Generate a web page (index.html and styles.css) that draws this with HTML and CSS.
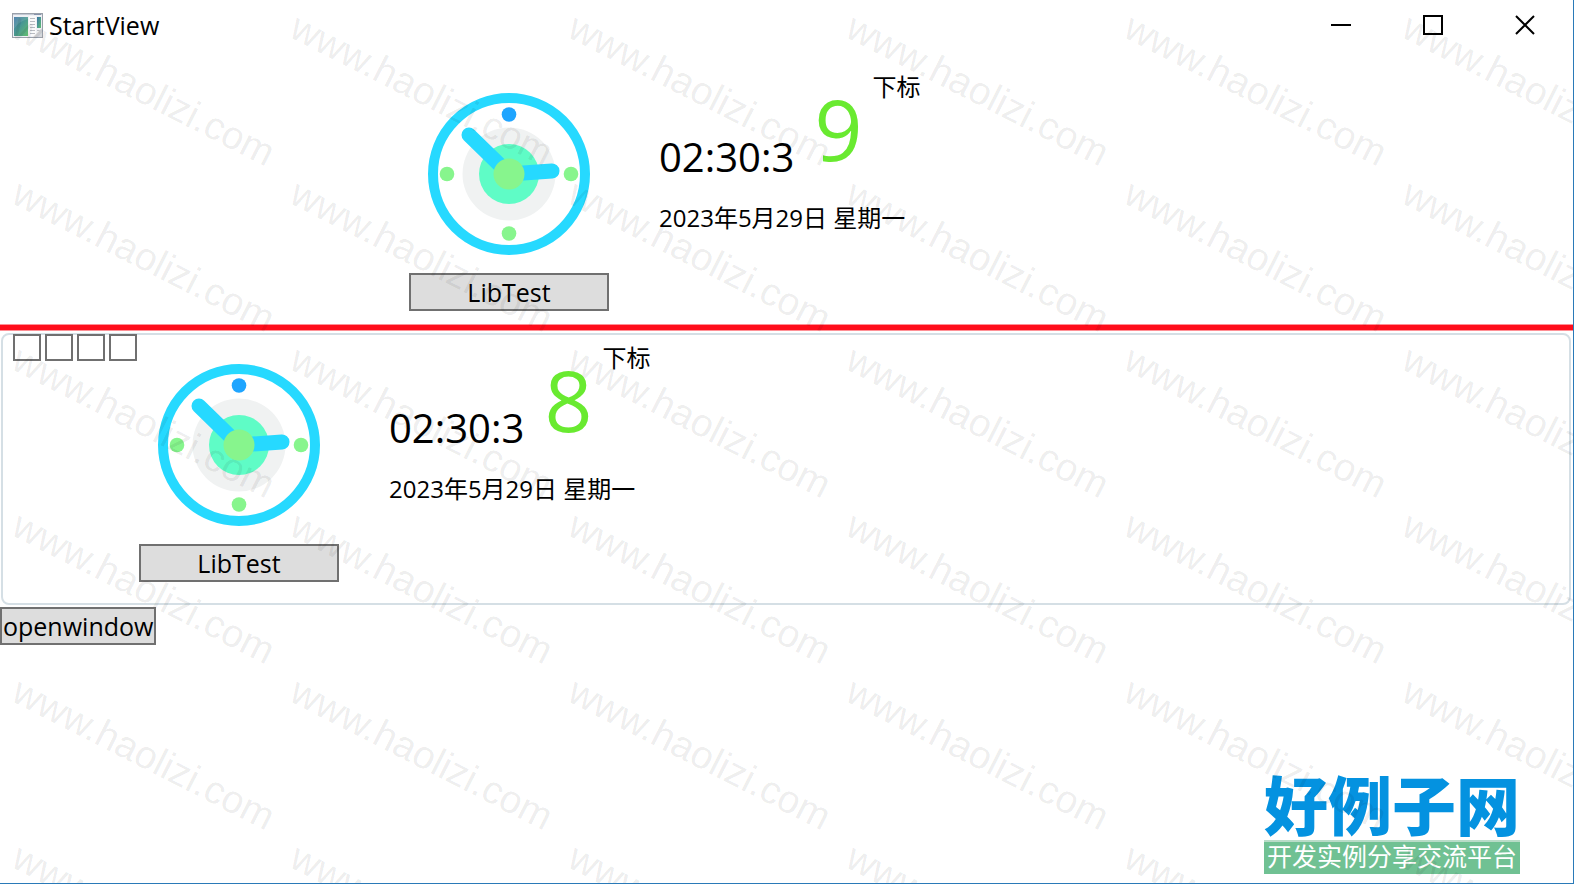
FILE: index.html
```html
<!DOCTYPE html>
<html lang="zh-CN">
<head>
<meta charset="utf-8">
<title>StartView</title>
<link rel="stylesheet" href="styles.css">
</head>
<body>
<svg class="defs" aria-hidden="true">
  <defs>
    <symbol id="clock" viewBox="0 0 162 162">
      <circle cx="81" cy="81" r="76" fill="#fff" stroke="#26d9ff" stroke-width="10"/>
      <circle cx="81" cy="81" r="46.500" fill="#f0f2f2"/>
      <circle cx="81" cy="81" r="30" fill="#5ffcc6"/>
      <path d="M81 81 41 42M81 81 124 78" fill="none" stroke="#26d9ff" stroke-width="15" stroke-linecap="round"/>
      <circle cx="81" cy="81" r="15.500" fill="#87f58d"/>
      <circle cx="81" cy="21.500" r="7.300" fill="#1fa5ff"/>
      <circle cx="19" cy="81" r="7.300" fill="#87f58d"/>
      <circle cx="143" cy="81" r="7.300" fill="#87f58d"/>
      <circle cx="81" cy="140.500" r="7.300" fill="#87f58d"/>
    </symbol>
  </defs>
</svg>
<div class="window">
  <header class="titlebar">
    <svg class="app-icon" viewBox="0 0 31 25" aria-hidden="true">
      <defs>
        <linearGradient id="pane" x1="0" y1="0" x2="1" y2="1">
          <stop offset="0" stop-color="#3a72a4"/><stop offset=".5" stop-color="#4a9a90"/><stop offset="1" stop-color="#62bd70"/>
        </linearGradient>
      </defs>
      <rect x=".5" y=".5" width="30" height="24" fill="#eef0f4" stroke="#9aa0aa"/>
      <path d="M1 1.500h29" stroke="#c3c9d4"/>
      <path d="M22 1.500h7" stroke="#8793ab"/>
      <rect x="2" y="4" width="14" height="19" fill="url(#pane)"/>
      <path d="M2 16Q7 8 16 6V4H2Z" fill="#fff" opacity=".12"/>
      <rect x="17" y="3" width="7" height="20" fill="#fafafa"/>
      <path d="M18 5.500h5M18 8.500h5M18 11.500h5M18 14.500h5M18 17.500h5M18 20.500h5M25 17.500h4M25 20.500h4" stroke="#b9bcc2"/>
      <rect x="25" y="4" width="4" height="11" fill="url(#pane)"/>
      <path d="M21 24 30 15V24Z" fill="#d5d7db"/>
    </svg>
    <h1 class="title">StartView</h1>
    <button class="caption" aria-label="Minimize"><svg viewBox="0 0 20 20"><path d="M0 10H20"/></svg></button>
    <button class="caption" aria-label="Maximize"><svg viewBox="0 0 20 20"><path d="M1 1H19V19H1Z"/></svg></button>
    <button class="caption" aria-label="Close"><svg viewBox="0 0 20 20"><path d="M1 1 19 19M19 1 1 19"/></svg></button>
  </header>
  <main>
    <section class="top">
      <div class="panel">
        <div class="clock-column">
          <svg class="clock" role="img" aria-label="Clock"><use href="#clock"/></svg>
          <button class="button wide">LibTest</button>
        </div>
        <div class="readout">
          <div class="time-row"><span class="time">02:30:3</span><span class="second">9</span><span class="note">下标</span></div>
          <p class="date">2023年5月29日 星期一</p>
        </div>
      </div>
    </section>
    <hr class="divider">
    <section class="group">
      <div class="checks">
        <input type="checkbox" aria-label="Option 1">
        <input type="checkbox" aria-label="Option 2">
        <input type="checkbox" aria-label="Option 3">
        <input type="checkbox" aria-label="Option 4">
      </div>
      <div class="panel">
        <div class="clock-column">
          <svg class="clock" role="img" aria-label="Clock"><use href="#clock"/></svg>
          <button class="button wide">LibTest</button>
        </div>
        <div class="readout">
          <div class="time-row"><span class="time">02:30:3</span><span class="second">8</span><span class="note">下标</span></div>
          <p class="date">2023年5月29日 星期一</p>
        </div>
      </div>
    </section>
    <button class="button">openwindow</button>
  </main>
  <aside class="brand">
    <strong class="brand-name">好例子网</strong>
    <span class="brand-line">开发实例分享交流平台</span>
  </aside>
  <div class="watermark" aria-hidden="true">
    <span>www.haolizi.com</span><span>www.haolizi.com</span><span>www.haolizi.com</span><span>www.haolizi.com</span><span>www.haolizi.com</span><span>www.haolizi.com</span>
    <span>www.haolizi.com</span><span>www.haolizi.com</span><span>www.haolizi.com</span><span>www.haolizi.com</span><span>www.haolizi.com</span><span>www.haolizi.com</span>
    <span>www.haolizi.com</span><span>www.haolizi.com</span><span>www.haolizi.com</span><span>www.haolizi.com</span><span>www.haolizi.com</span><span>www.haolizi.com</span>
    <span>www.haolizi.com</span><span>www.haolizi.com</span><span>www.haolizi.com</span><span>www.haolizi.com</span><span>www.haolizi.com</span><span>www.haolizi.com</span>
    <span>www.haolizi.com</span><span>www.haolizi.com</span><span>www.haolizi.com</span><span>www.haolizi.com</span><span>www.haolizi.com</span><span>www.haolizi.com</span>
    <span>www.haolizi.com</span><span>www.haolizi.com</span><span>www.haolizi.com</span><span>www.haolizi.com</span><span>www.haolizi.com</span><span>www.haolizi.com</span>
  </div>
</div>
</body>
</html>
```

FILE: styles.css
```css
* { box-sizing: border-box; }

body {
  margin: 0;
  background: #fff;
  color: #000;
  font: 24px/32px "Open Sans", "Noto Sans CJK SC", sans-serif;
}

.defs { position: absolute; width: 0; height: 0; }

.window {
  position: relative;
  min-height: 100vh;
  overflow: hidden;
  border: solid #2a7ab8;
  border-width: 0 1px 1px 0;
}

.titlebar {
  display: flex;
  align-items: center;
  height: 50px;
  padding: 0 2px 0 12px;
}

.app-icon { width: 31px; height: 25px; }

.title {
  flex: 1;
  margin: 0 0 0 6px;
  font-size: 25px;
  font-weight: 400;
}

.caption {
  display: grid;
  place-items: center;
  width: 92px;
  height: 50px;
  padding: 0;
  border: 0;
  background: none;
}

.caption svg {
  width: 20px;
  height: 20px;
  fill: none;
  stroke: #000;
  stroke-width: 2;
}

.top {
  display: flex;
  justify-content: center;
  padding: 14px 0 13px;
}

.panel {
  display: flex;
  gap: 50px;
  width: 755px;
}

.clock-column {
  display: flex;
  flex-direction: column;
  align-items: center;
  gap: 18px;
  width: 200px;
  padding-top: 29px;
}

.clock { width: 162px; height: 162px; }

.button {
  display: block;
  height: 38px;
  padding: 0 1px;
  border: 2px solid #707070;
  background: #ddd;
  color: #000;
  font: inherit;
  font-size: 25px;
}

.wide { width: 100%; }

.time-row { display: flex; align-items: flex-start; height: 116px; }

.time { padding-top: 69px; font-size: 40px; line-height: 48px; }

.second {
  margin: 21px 10px 0 20px;
  color: #69ea30;
  font-size: 84px;
  line-height: 88px;
}

.note { padding-top: 7px; }

.date { margin: 22px 0 0; }

.divider {
  height: 7px;
  margin: 0;
  border: solid #ff8f95;
  border-width: 1px 0;
  background: #ff0d1b;
}

.group {
  display: flex;
  gap: 2px;
  margin: 2px 2px 2px 1px;
  padding: 0 0 21px 10px;
  border: 2px solid #d5dfe5;
  border-radius: 8px;
}

.checks { display: flex; gap: 4px; margin-top: -1px; }

.checks input {
  appearance: none;
  width: 28px;
  height: 27px;
  margin: 0;
  border: 2px solid #707070;
  background: #fff;
}

.brand {
  position: absolute;
  right: 53px;
  bottom: 9px;
  display: flex;
  flex-direction: column;
  gap: 6px;
  font-family: "Noto Sans CJK SC", sans-serif;
}

.brand-name {
  color: #0492e0;
  font-size: 64px;
  font-weight: 900;
  line-height: 64px;
}

.brand-line {
  padding: 0 3px 5px;
  border-top: 2px solid #b9dcc8;
  background: #70c193;
  color: #fff;
  font-size: 25px;
  line-height: 27px;
}

.watermark {
  position: absolute;
  inset: 3px 0 0 9px;
  display: grid;
  grid-template-columns: repeat(6, 278px);
  grid-auto-rows: 166px;
  pointer-events: none;
  color: rgba(0, 0, 0, 0.08);
  font: 39px/40px "Liberation Sans", sans-serif;
}

.watermark span {
  white-space: nowrap;
  transform: rotate(27deg);
  transform-origin: 0 34px;
}
```
